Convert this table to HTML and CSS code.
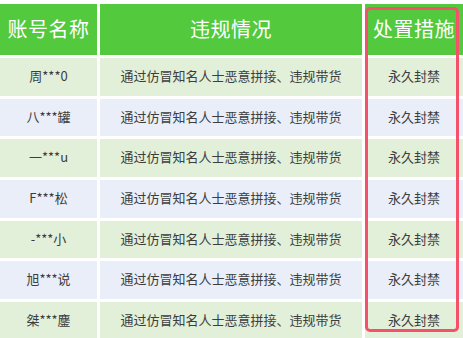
FILE: index.html
```html
<!DOCTYPE html>
<html lang="zh">
<head>
<meta charset="utf-8">
<link rel="stylesheet" href="styles.css">
</head>
<body>
<div class="wrap">
  <div class="grid">
    <div class="cell head">账号名称</div>
    <div class="cell head">违规情况</div>
    <div class="cell head">处置措施</div>

    <div class="cell g">周***0</div>
    <div class="cell g">通过仿冒知名人士恶意拼接、违规带货</div>
    <div class="cell g">永久封禁</div>

    <div class="cell b">八***罐</div>
    <div class="cell b">通过仿冒知名人士恶意拼接、违规带货</div>
    <div class="cell b">永久封禁</div>

    <div class="cell g">一***u</div>
    <div class="cell g">通过仿冒知名人士恶意拼接、违规带货</div>
    <div class="cell g">永久封禁</div>

    <div class="cell b">F***松</div>
    <div class="cell b">通过仿冒知名人士恶意拼接、违规带货</div>
    <div class="cell b">永久封禁</div>

    <div class="cell g">-***小</div>
    <div class="cell g">通过仿冒知名人士恶意拼接、违规带货</div>
    <div class="cell g">永久封禁</div>

    <div class="cell b">旭***说</div>
    <div class="cell b">通过仿冒知名人士恶意拼接、违规带货</div>
    <div class="cell b">永久封禁</div>

    <div class="cell g">桀***鏖</div>
    <div class="cell g">通过仿冒知名人士恶意拼接、违规带货</div>
    <div class="cell g">永久封禁</div>
  </div>
  <div class="highlight"></div>
</div>
</body>
</html>
```
FILE: styles.css
```css
html, body {
  margin: 0;
  padding: 0;
  background: #ffffff;
  overflow: hidden;
}
body {
  font-family: "Noto Sans CJK SC", "Noto Sans", sans-serif;
}
.wrap {
  position: relative;
  width: 463px;
  height: 338px;
  padding-top: 4px;
  box-sizing: border-box;
}
.grid {
  display: grid;
  grid-template-columns: 97px 262px 98px;
  grid-template-rows: 51px repeat(7, 37.7px);
  gap: 3px;
}
.cell {
  display: flex;
  align-items: center;
  justify-content: center;
  font-size: 13px;
  color: #3d3d3d;
  white-space: nowrap;
  padding-bottom: 3px;
  box-sizing: border-box;
}
.head {
  background: #53c93d;
  color: #ffffff;
  font-size: 20px;
  letter-spacing: 0.5px;
  padding-bottom: 3px;
}
.g {
  background: #e2efd9;
}
.b {
  background: #e9eef8;
}
.highlight {
  position: absolute;
  left: 365px;
  top: 7px;
  width: 94px;
  height: 325px;
  box-sizing: border-box;
  border: 3px solid #f4516b;
  border-radius: 5px;
}
```
